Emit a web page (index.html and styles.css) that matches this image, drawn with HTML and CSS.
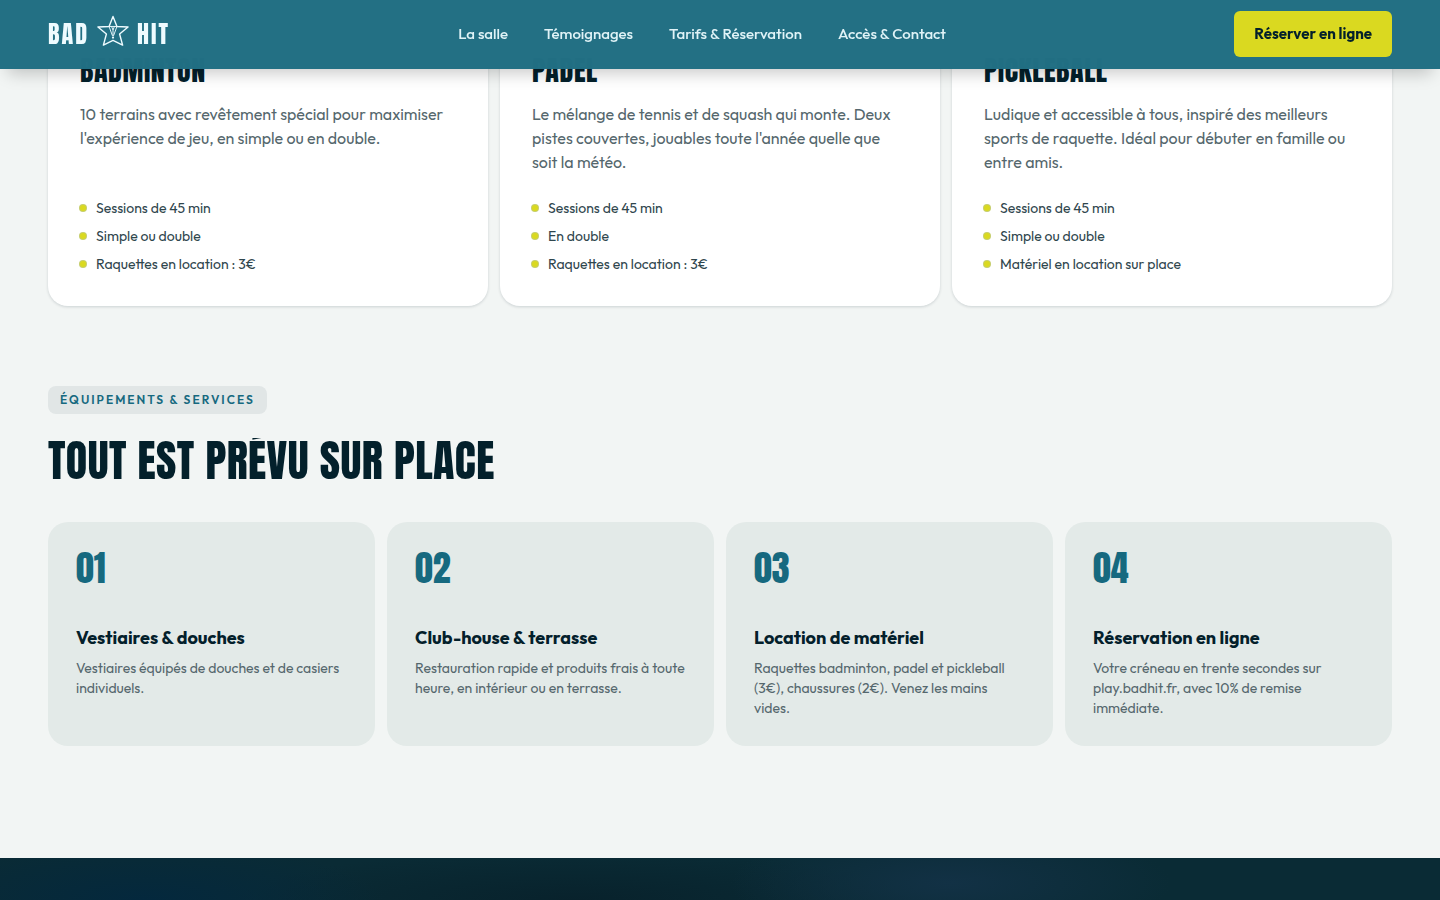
FILE: index.html
```html
<!DOCTYPE html>
<html lang="fr">
<head>
<meta charset="utf-8">
<meta name="viewport" content="width=device-width, initial-scale=1">
<title>Bad Hit</title>
<link rel="stylesheet" href="styles.css">
</head>
<body>
<header class="site-header">
  <a class="logo" href="#" aria-label="Bad Hit">
    <span>BAD</span>
    <svg class="logo-star" viewBox="0 0 34 34" aria-hidden="true">
      <path d="M17 1.5 21.2 12.2 33 12.8 24 20.2 27.2 32 17 27 6.8 32 10 20.2 1 12.8 12.8 12.2Z"/>
      <path class="thin" d="M12.8 12.2h8.4L17.6 22h-1.2ZM15.5 12.2 17 16l1.5-3.8M17 16v6"/>
      <circle class="dot" cx="17" cy="24" r="1.2"/>
    </svg>
    <span>HIT</span>
  </a>
  <nav class="nav" aria-label="Navigation principale">
    <a href="#salle">La salle</a>
    <a href="#temoignages">Témoignages</a>
    <a href="#tarifs">Tarifs &amp; Réservation</a>
    <a href="#acces">Accès &amp; Contact</a>
  </nav>
  <button class="book" type="button">Réserver en ligne</button>
</header>
<main>
  <section class="sports" id="salle">
    <article class="sport">
      <h3>BADMINTON</h3>
      <p>10 terrains avec revêtement spécial pour maximiser l'expérience de jeu, en simple ou en double.</p>
      <ul>
        <li>Sessions de 45 min</li>
        <li>Simple ou double</li>
        <li>Raquettes en location : 3€</li>
      </ul>
    </article>
    <article class="sport">
      <h3>PADEL</h3>
      <p>Le mélange de tennis et de squash qui monte. Deux pistes couvertes, jouables toute l'année quelle que soit la météo.</p>
      <ul>
        <li>Sessions de 45 min</li>
        <li>En double</li>
        <li>Raquettes en location : 3€</li>
      </ul>
    </article>
    <article class="sport">
      <h3>PICKLEBALL</h3>
      <p>Ludique et accessible à tous, inspiré des meilleurs sports de raquette. Idéal pour débuter en famille ou entre amis.</p>
      <ul>
        <li>Sessions de 45 min</li>
        <li>Simple ou double</li>
        <li>Matériel en location sur place</li>
      </ul>
    </article>
  </section>
  <section class="services">
    <span class="tag">ÉQUIPEMENTS &amp; SERVICES</span>
    <h2>TOUT EST PRÉVU SUR PLACE</h2>
    <div class="service-grid">
      <article class="service">
        <span class="number">01</span>
        <h3>Vestiaires &amp; douches</h3>
        <p>Vestiaires équipés de douches et de casiers individuels.</p>
      </article>
      <article class="service">
        <span class="number">02</span>
        <h3>Club-house &amp; terrasse</h3>
        <p>Restauration rapide et produits frais à toute heure, en intérieur ou en terrasse.</p>
      </article>
      <article class="service">
        <span class="number">03</span>
        <h3>Location de matériel</h3>
        <p>Raquettes badminton, padel et pickleball (3€), chaussures (2€). Venez les mains vides.</p>
      </article>
      <article class="service">
        <span class="number">04</span>
        <h3>Réservation en ligne</h3>
        <p>Votre créneau en trente secondes sur play.badhit.fr, avec 10% de remise immédiate.</p>
      </article>
    </div>
  </section>
</main>
<section class="dark-band" id="temoignages" aria-label="Témoignages"></section>
</body>
</html>
```
FILE: styles.css
```css
:root {
  --teal: #16697f;
  --ink: #03202b;
  --lime: #dad920;
  --body: Outfit, Lato, "Open Sans", sans-serif;
  --display: Anton, "Liberation Sans Narrow", "Arial Narrow", "Liberation Sans", sans-serif;
}

* { box-sizing: border-box; }

body {
  margin: 0;
  min-height: 100vh;
  display: flex;
  flex-direction: column;
  background: #f2f5f4;
  color: var(--ink);
  font-family: var(--body);
}

h2, h3, p, ul { margin: 0; padding: 0; }

.site-header {
  position: fixed;
  inset: 0 0 auto;
  z-index: 10;
  display: flex;
  align-items: center;
  justify-content: space-between;
  padding: 11px 48px 12px;
  background: rgba(31, 109, 130, 0.98);
  backdrop-filter: blur(20px);
  box-shadow: 0 12px 16px -8px rgba(0, 0, 0, 0.22);
}

.logo {
  display: flex;
  align-items: center;
  gap: 8px;
  color: #eefbff;
  font: 400 24px/32px var(--display);
  letter-spacing: 2px;
  text-decoration: none;
}

.logo-star {
  width: 32px;
  height: 32px;
  margin-top: -6px;
  fill: none;
  stroke: currentColor;
  stroke-width: 1.5;
  stroke-linejoin: round;
}

.logo-star .thin { stroke-width: 1; }

.logo-star .dot {
  fill: currentColor;
  stroke: none;
}

.nav { display: flex; gap: 36px; }

.nav a {
  color: #e0f3f7;
  font-size: 15px;
  font-weight: 500;
  line-height: 24px;
  text-decoration: none;
}

.book {
  padding: 11px 20px;
  border: 0;
  border-radius: 6px;
  background: var(--lime);
  color: var(--ink);
  font: 700 15px/24px var(--body);
}

.sports {
  display: grid;
  grid-template-columns: repeat(3, 1fr);
  gap: 12px;
  padding: 0 48px;
}

.sport {
  display: flex;
  flex-direction: column;
  padding: 56px 32px 28px;
  border-radius: 0 0 20px 20px;
  background: #fff;
  box-shadow: 0 1px 3px rgba(3, 32, 43, 0.16);
}

.sport h3 {
  font: 400 28px/28px var(--display);
  letter-spacing: 0.02em;
}

.sport p {
  flex: 1;
  margin: 18px 0 20px;
  color: #55676d;
  font-size: 16px;
  line-height: 24px;
}

.sport ul { list-style: none; }

.sport li {
  display: flex;
  align-items: center;
  gap: 10px;
  color: #2f464d;
  font-size: 14px;
  line-height: 28px;
}

.sport li::before {
  content: "";
  width: 6px;
  height: 6px;
  border-radius: 50%;
  background: var(--lime);
  box-shadow: 0 0 0 1px #c6ce6c;
}

.services { padding: 80px 48px 112px; }

.tag {
  display: inline-block;
  padding: 0 12px;
  border-radius: 8px;
  background: #e1e6e6;
  color: var(--teal);
  font-size: 12px;
  font-weight: 600;
  line-height: 28px;
  letter-spacing: 2px;
  vertical-align: top;
}

.services h2 {
  margin: 24px 0 40px;
  background: var(--ink);
  background-clip: text;
  -webkit-background-clip: text;
  -webkit-text-fill-color: transparent;
  font: 400 44px/44px var(--display);
  letter-spacing: 0.01em;
}

.service-grid {
  display: grid;
  grid-template-columns: repeat(4, 1fr);
  gap: 12px;
}

.service {
  padding: 24px 28px 28px;
  border-radius: 20px;
  background: #e3eae8;
}

.number {
  display: block;
  margin-bottom: 36px;
  color: var(--teal);
  font: 400 36px/44px var(--display);
}

.service h3 {
  margin-bottom: 8px;
  font-size: 18px;
  font-weight: 700;
  line-height: 24px;
}

.service p {
  color: #55676d;
  font-size: 14px;
  line-height: 20px;
}

.dark-band {
  flex: 1 0 42px;
  background:
    radial-gradient(ellipse 240px 60px at 10% 100%, #04283d, transparent),
    radial-gradient(ellipse 220px 60px at 66% 60%, #123145, transparent),
    radial-gradient(ellipse 340px 50px at 40% 100%, #08222c, transparent),
    #0a2b35;
}
```
